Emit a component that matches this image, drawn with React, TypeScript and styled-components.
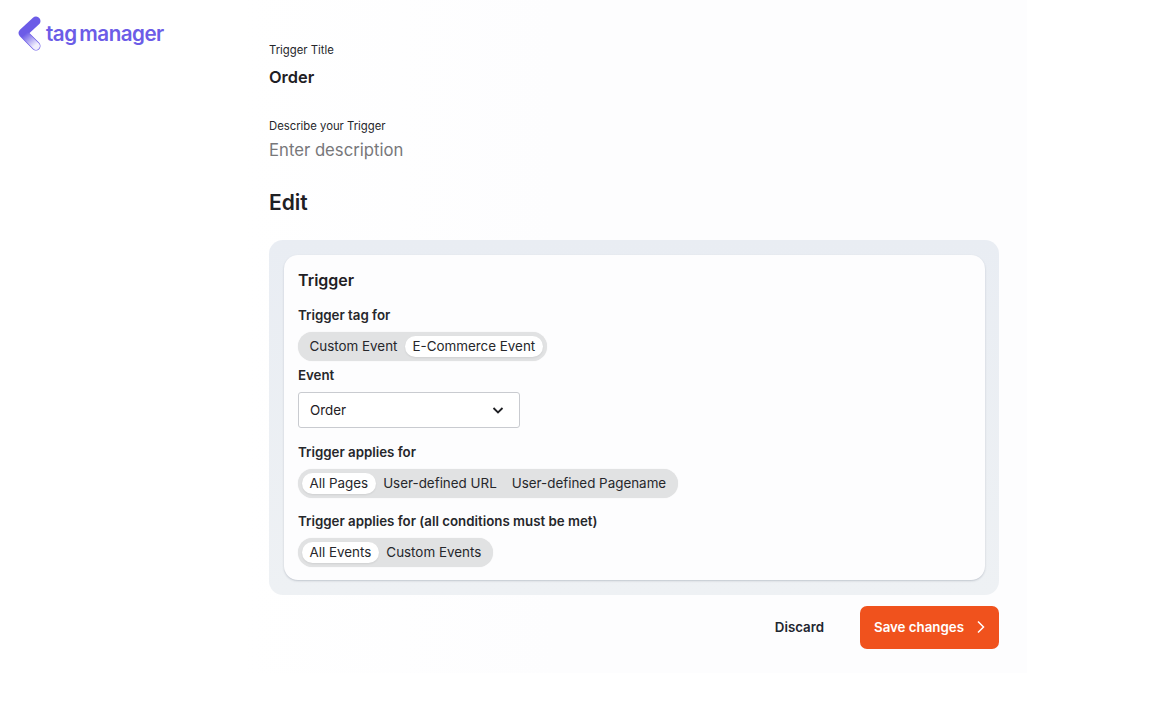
import styled, { createGlobalStyle } from 'styled-components';

const GlobalStyle = createGlobalStyle`
  html, body {
    margin: 0;
    padding: 0;
    background: #ffffff;
    font-family: Inter, "Liberation Sans", sans-serif;
    color: #1f2024;
  }
`;

const Page = styled.div`
  display: flex;
  width: 1173px;
  height: 709px;
  overflow: hidden;
`;

const Sidebar = styled.aside`
  width: 241px;
  flex: none;
  padding: 14px 0 0 17px;
  box-sizing: border-box;
`;

const LogoRow = styled.div`
  display: flex;
  align-items: center;
  gap: 5px;
`;

const LogoText = styled.span`
  margin-top: 1px;
  font-size: 20.6px;
  font-weight: 600;
  letter-spacing: -0.5px;
  color: #6c5ce7;
  word-spacing: -2px;
`;

const Main = styled.main`
  width: 786px;
  height: 673px;
  flex: none;
  box-sizing: border-box;
  padding: 43px 28px 0;
  background: linear-gradient(90deg, #ffffff, #fdfdfe 40%);
`;

const FieldLabel = styled.div`
  font-size: 11.3px;
  line-height: 15px;
  color: #26272b;
`;

const TitleValue = styled.div`
  margin-top: 9px;
  font-size: 16.4px;
  line-height: 20px;
  font-weight: 600;
  color: #1f2024;
  margin-bottom: 32px;
`;

const Placeholder = styled.div`
  margin-top: 6px;
  font-size: 16.7px;
  line-height: 20px;
  color: #77777a;
`;

const Heading = styled.h2`
  margin: 30px 0 0;
  font-size: 21px;
  line-height: 26px;
  font-weight: 600;
  color: #1f2024;
`;

const Outer = styled.section`
  margin-top: 24px;
  padding: 15px 14px 15px 15px;
  background: linear-gradient(180deg, #e9edf3, #eef1f4);
  border-radius: 14px;
`;

const Card = styled.div`
  height: 325px;
  box-sizing: border-box;
  padding: 15px 14px 0;
  background: #fdfdfe;
  border-radius: 14px;
  box-shadow: 0 1px 2px rgba(90, 100, 120, 0.3);
`;

const CardTitle = styled.h3`
  margin: 0;
  font-size: 16px;
  line-height: 20px;
  font-weight: 600;
`;

const GroupLabel = styled.div<{ $top: number }>`
  margin-top: ${p => p.$top}px;
  font-size: 13.3px;
  line-height: 16px;
  font-weight: 600;
  color: #26272b;
`;

const Toggle = styled.div`
  display: inline-flex;
  align-items: center;
  margin-top: 9px;
  height: 29px;
  padding: 0 4px;
  box-sizing: border-box;
  background: #e1e2e3;
  border-radius: 15px;
  box-shadow: 0 0 1px rgba(0, 0, 0, 0.12);
`;

const ToggleItem = styled.span<{ $active?: boolean }>`
  display: block;
  height: 21px;
  line-height: 21px;
  padding: 0 7.5px;
  font-size: 13.4px;
  white-space: nowrap;
  color: #26272b;
  border-radius: 11px;
  background: ${p => (p.$active ? '#ffffff' : 'transparent')};
  box-shadow: ${p => (p.$active ? '0 1px 2px rgba(0, 0, 0, 0.08)' : 'none')};
`;

const Select = styled.div`
  display: flex;
  align-items: center;
  justify-content: space-between;
  margin-top: 9px;
  width: 222px;
  height: 36px;
  box-sizing: border-box;
  padding: 0 15px 1px 11px;
  border: 1px solid #c9cbd0;
  border-radius: 3px;
  background: #ffffff;
  font-size: 13.4px;
`;

const Actions = styled.div`
  display: flex;
  justify-content: flex-end;
  align-items: center;
  margin-top: 11px;
  gap: 36px;
`;

const Discard = styled.button`
  border: 0;
  padding: 0 0 2px;
  background: none;
  font: 600 13.3px Inter, sans-serif;
  color: #1f2630;
`;

const Save = styled.button`
  display: flex;
  align-items: center;
  justify-content: space-between;
  width: 139px;
  height: 43px;
  box-sizing: border-box;
  padding: 0 12px 1px 14px;
  border: 0;
  border-radius: 7px;
  background: #f0521d;
  font: 600 13.3px Inter, sans-serif;
  color: #ffffff;
`;

const Logo = () => (
  <svg width="24" height="38" viewBox="0 0 24 38">
    <defs>
      <linearGradient id="tail" x1="0.1" y1="0" x2="0.9" y2="1">
        <stop offset="0" stopColor="#6c5ce7" />
        <stop offset="1" stopColor="#f1effd" />
      </linearGradient>
    </defs>
    <path d="M19 7 L6 19 L19 32" fill="none" stroke="#6c5ce7" strokeWidth="9" strokeLinecap="round" strokeLinejoin="round" />
    <path d="M7 20 L19 32" fill="none" stroke="url(#tail)" strokeWidth="7.5" strokeLinecap="round" />
  </svg>
);

const App = () => (
  <Page>
    <GlobalStyle />
    <Sidebar>
      <LogoRow>
        <Logo />
        <LogoText>tag manager</LogoText>
      </LogoRow>
    </Sidebar>
    <Main>
      <FieldLabel>Trigger Title</FieldLabel>
      <TitleValue>Order</TitleValue>
      <FieldLabel>Describe your Trigger</FieldLabel>
      <Placeholder>Enter description</Placeholder>
      <Heading>Edit</Heading>
      <Outer>
        <Card>
          <CardTitle>Trigger</CardTitle>
          <GroupLabel $top={17}>Trigger tag for</GroupLabel>
          <Toggle>
            <ToggleItem>Custom Event</ToggleItem>
            <ToggleItem $active>E-Commerce Event</ToggleItem>
          </Toggle>
          <GroupLabel $top={6}>Event</GroupLabel>
          <Select>
            Order
            <svg width="12" height="12" viewBox="0 0 12 12">
              <path d="M1.5 4 L6 8.5 L10.5 4" fill="none" stroke="#1f2024" strokeWidth="1.8" />
            </svg>
          </Select>
          <GroupLabel $top={16}>Trigger applies for</GroupLabel>
          <Toggle>
            <ToggleItem $active>All Pages</ToggleItem>
            <ToggleItem>User-defined URL</ToggleItem>
            <ToggleItem>User-defined Pagename</ToggleItem>
          </Toggle>
          <GroupLabel $top={15}>Trigger applies for (all conditions must be met)</GroupLabel>
          <Toggle>
            <ToggleItem $active>All Events</ToggleItem>
            <ToggleItem>Custom Events</ToggleItem>
          </Toggle>
        </Card>
      </Outer>
      <Actions>
        <Discard>Discard</Discard>
        <Save>
          Save changes
          <svg width="12" height="14" viewBox="0 0 12 14">
            <path d="M3 1.5 L8.5 7 L3 12.5" fill="none" stroke="#ffffff" strokeWidth="1.5" />
          </svg>
        </Save>
      </Actions>
    </Main>
  </Page>
);

export default App;
